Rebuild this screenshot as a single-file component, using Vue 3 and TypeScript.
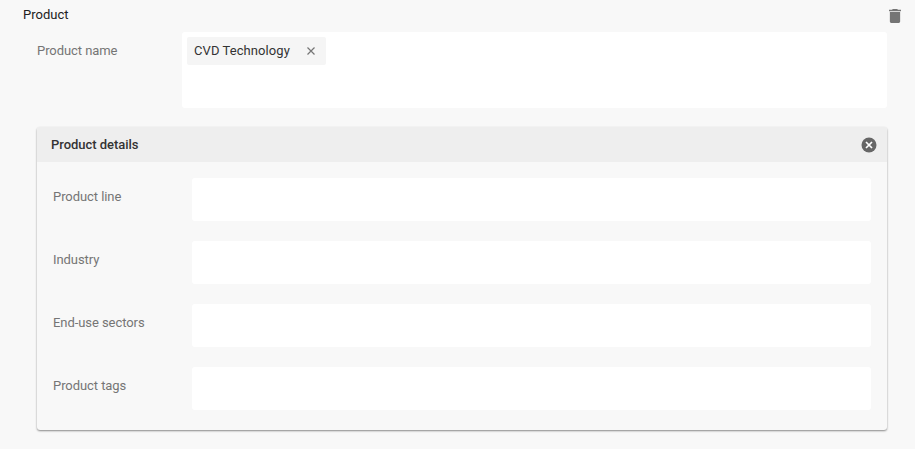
<script setup lang="ts">
const rows: string[] = ['Product line', 'Industry', 'End-use sectors', 'Product tags']
</script>

<template>
  <div class="page">
    <div class="head">
      <span class="title">Product</span>
      <svg class="trash" width="12" height="14" viewBox="5 3 14 18" preserveAspectRatio="none" aria-hidden="true">
        <path fill="#757575" d="M6 19c0 1.1.9 2 2 2h8c1.1 0 2-.9 2-2V7H6v12zM19 4h-3.500l-1-1h-5l-1 1H5v2h14V4z" />
      </svg>
    </div>
    <div class="name-row">
      <label class="label">Product name</label>
      <div class="name-field">
        <span class="chip">
          <span class="chip-text">CVD Technology</span>
          <svg class="chip-x" width="10" height="10" viewBox="0 0 10 10" aria-hidden="true">
            <path d="M1.500 1.500l7 7M8.500 1.500l-7 7" stroke="#757575" stroke-width="1.200" fill="none" />
          </svg>
        </span>
      </div>
    </div>
    <section class="card">
      <header class="card-head">
        <span class="card-title">Product details</span>
        <svg width="16" height="16" viewBox="0 0 16 16" aria-hidden="true">
          <circle cx="8" cy="8" r="7.500" fill="#666" />
          <path d="M5 5l6 6M11 5l-6 6" stroke="#fff" stroke-width="1.700" fill="none" />
        </svg>
      </header>
      <div class="card-body">
        <div v-for="row in rows" :key="row" class="row">
          <label class="label">{{ row }}</label>
          <div class="field"></div>
        </div>
      </div>
    </section>
  </div>
</template>

<style scoped>
.page {
  width: 915px;
  height: 449px;
  box-sizing: border-box;
  background: #f8f8f8;
  font-family: Roboto, sans-serif;
  font-size: 13px;
  padding: 5px 28px 0 23px;
  overflow: hidden;
}
.head {
  display: flex;
  justify-content: space-between;
  align-items: center;
  height: 19px;
  margin-bottom: 8px;
}
.title {
  color: #212121;
}
.trash {
  margin-right: -14px;
  margin-top: 2px;
}
.name-row {
  display: flex;
  margin-left: 14px;
  height: 76px;
}
.name-row .label {
  width: 145px;
  padding-top: 11px;
  flex: none;
}
.label {
  color: #757575;
  line-height: 16px;
  letter-spacing: -0.005em;
}
.name-field {
  flex: 1;
  background: #fff;
  border-radius: 3px;
  padding: 5px;
}
.chip {
  display: inline-flex;
  align-items: center;
  height: 28px;
  box-sizing: border-box;
  padding: 0 10px 2px 7px;
  background: #f5f5f5;
  color: #333;
  gap: 16px;
  border-radius: 2px;
}
.chip-text {
  letter-spacing: 0.006em;
}
.chip-x {
  margin-top: 2px;
}
.card {
  margin: 19px 0 0 14px;
  background: #f8f8f8;
  border-radius: 3px;
  box-shadow: 0 1px 2px rgba(0, 0, 0, 0.45);
}
.card-head {
  height: 35px;
  box-sizing: border-box;
  background: #eeeeee;
  border-radius: 3px 3px 0 0;
  display: flex;
  justify-content: space-between;
  align-items: center;
  padding: 0 10px 0 14px;
  color: #333;
  font-weight: 500;
}
.card-title {
  letter-spacing: -0.003em;
}
.card-body {
  padding: 16px 16px 20px;
  display: flex;
  flex-direction: column;
  gap: 20px;
}
.row {
  display: flex;
  height: 43px;
}
.row .label {
  width: 139px;
  flex: none;
  padding-top: 11px;
}
.field {
  flex: 1;
  background: #fff;
  border-radius: 3px;
}
</style>
